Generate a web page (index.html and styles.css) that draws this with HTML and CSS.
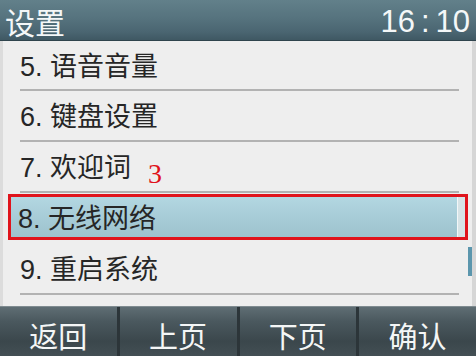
FILE: index.html
```html
<!DOCTYPE html>
<html lang="zh">
<head>
<meta charset="utf-8">
<link rel="stylesheet" href="styles.css">
</head>
<body>
<div class="screen">
  <header class="topbar">
    <span class="title">设置</span>
    <span class="clock">16<span class="colon">:</span>10</span>
  </header>
  <main class="panel">
    <ul class="menu">
      <li class="row">5. 语音音量</li>
      <li class="row">6. 键盘设置</li>
      <li class="row">7. 欢迎词<span class="mark">3</span></li>
      <li class="row selected"><div class="hl">8. 无线网络</div></li>
      <li class="row">9. 重启系统</li>
    </ul>
    <div class="scroll"></div>
  </main>
  <footer class="softkeys">
    <div class="key">返回</div>
    <div class="key">上页</div>
    <div class="key">下页</div>
    <div class="key">确认</div>
  </footer>
</div>
</body>
</html>
```
FILE: styles.css
```css
* { box-sizing: border-box; }
html, body { margin: 0; padding: 0; }
body {
  width: 476px;
  height: 356px;
  overflow: hidden;
  font-family: "Liberation Sans", "Noto Sans CJK SC", sans-serif;
}
.screen {
  width: 476px;
  height: 356px;
  display: flex;
  flex-direction: column;
}
.topbar {
  height: 41px;
  flex: none;
  display: flex;
  align-items: flex-start;
  justify-content: space-between;
  padding: 0 6px 0 5px;
  color: #f4f7f8;
  background: linear-gradient(180deg, #62808a 0%, #56737e 45%, #4a6571 80%, #3f5863 100%);
  border-bottom: 1px solid #2f444d;
}
.title {
  font-size: 30px;
  line-height: 43px;
  font-family: "Noto Sans CJK SC", sans-serif;
}
.clock {
  font-size: 31px;
  line-height: 43px;
}
.colon { margin: 0 6px; }
.panel {
  position: relative;
  flex: 1;
  background: #eeeeee;
  border-left: 3px solid #dcdcdc;
  border-right: 4px solid #d6d6d6;
}
.menu {
  list-style: none;
  margin: 0;
  padding: 0;
}
.row {
  position: relative;
  height: 51px;
  margin: 0 13px 0 17px;
  border-bottom: 2px solid #b2b2b2;
  display: flex;
  align-items: center;
  font-size: 27px;
  color: #262626;
  padding-bottom: 2px;
}
.row:first-child { height: 50px; }
.mark {
  position: absolute;
  left: 128px;
  top: 18px;
  font-family: "Liberation Serif", serif;
  font-size: 28px;
  line-height: 1;
  color: #e0121a;
}
.row.selected {
  margin: 0;
  border-bottom: none;
  padding: 1px 4px 4px 5px;
  height: 51px;
}
.hl {
  width: 461px;
  height: 46px;
  border: 3px solid #e0141c;
  display: flex;
  align-items: center;
  padding-left: 7px;
  padding-bottom: 2px;
  background: linear-gradient(180deg, #b3d7e1 0%, #a6cbd6 55%, #9ec2cd 100%);
  box-shadow: inset -7px 0 0 #d7e3e6, inset -8px 0 0 #f2f7f8;
}
.scroll {
  position: absolute;
  right: 0;
  top: 206px;
  width: 4px;
  height: 29px;
  background: #5b96ad;
}
.softkeys {
  height: 50px;
  flex: none;
  display: flex;
  background: linear-gradient(180deg, #5f6e74 0%, #4a585e 30%, #3b474c 70%, #434f54 100%);
  border-top: 1px solid #7f8b90;
}
.key {
  flex: 1;
  display: flex;
  align-items: flex-start;
  justify-content: center;
  padding-top: 7px;
  color: #f4f6f6;
  font-size: 29px;
  line-height: 42px;
  font-family: "Noto Sans CJK SC", sans-serif;
  border-left: 3px solid;
  border-image: linear-gradient(90deg, #2c3539 0 33%, #8fa4aa 33% 66%, #3a4549 66%) 1;
}
.key:first-child { border-left: none; }
```
